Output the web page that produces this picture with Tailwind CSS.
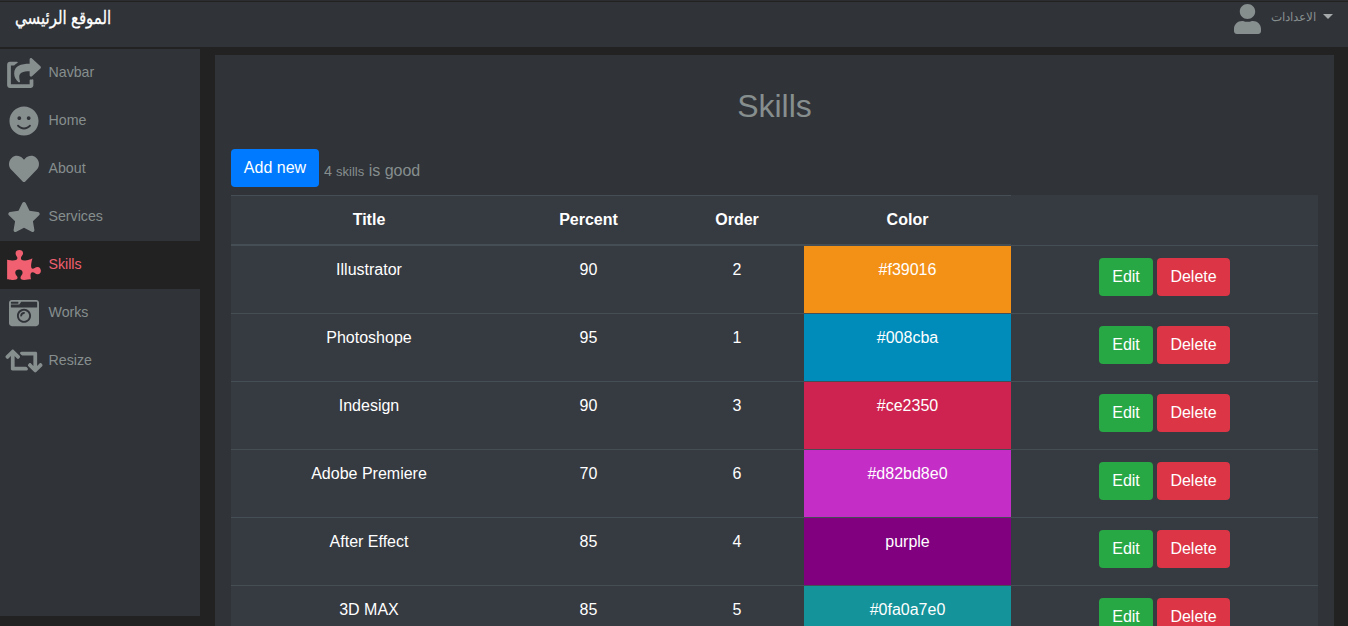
<!DOCTYPE html>
<html lang="en">
<head>
<meta charset="utf-8">
<title>Skills</title>
<script src="https://cdn.jsdelivr.net/npm/@tailwindcss/browser@4"></script>
</head>
<body class="h-[626px] overflow-hidden bg-[#222222] font-['Liberation_Sans',Arial,sans-serif] text-base text-[#868e8e]">
<header class="flex h-[47px] items-start justify-between border-t border-[#2b2d31] bg-[#303338] shadow-[inset_0_1px_0_#222]">
  <a class="ml-[15px] mt-[3px] origin-left scale-x-[0.835] text-[18px] leading-7 text-white [-webkit-text-stroke:0.3px_white] font-['Liberation_Sans','DejaVu_Sans',sans-serif]" dir="rtl">الموقع الرئيسي</a>
  <div class="mr-[15px] flex items-start">
    <svg class="mt-[3px] h-[30px] w-[27px]" viewBox="0 0 448 512" preserveAspectRatio="none" fill="currentColor"><path d="M224 256c70.7 0 128-57.3 128-128S294.7 0 224 0 96 57.3 96 128s57.3 128 128 128zm89.6 32h-16.7c-22.2 10.2-46.9 16-72.9 16s-50.6-5.8-72.9-16h-16.7C60.2 288 0 348.2 0 422.4V464c0 26.5 21.5 48 48 48h352c26.5 0 48-21.5 48-48v-41.6c0-74.2-60.2-134.4-134.4-134.4z"/></svg>
    <span class="ml-[10px] mt-[6px] text-[12px] leading-5" dir="rtl">الاعدادات</span>
    <span class="ml-[7px] mt-[13px] border-x-[5px] border-t-[5px] border-x-transparent border-t-[#a5a9aa]"></span>
  </div>
</header>
<div class="mt-[2px] flex items-start">
  <nav class="h-[567px] w-[200px] shrink-0 bg-[#303338] text-[14.2px]">
    <a class="flex h-12 items-center pl-[5px]"><svg class="h-[30px] w-[38px]" viewBox="0 0 576 512" fill="currentColor"><path d="M568.482 177.448L424.479 313.433C409.3 327.768 384 317.14 384 295.985v-71.963c-144.575.97-205.566 35.113-164.775 171.353 4.483 14.973-12.846 26.567-25.006 17.33C155.252 383.105 120 326.488 120 269.339c0-143.937 117.599-172.5 264-173.312V24.012c0-21.174 25.317-31.768 40.479-17.448l144.003 135.988c10.02 9.463 10.028 25.425 0 34.896zM384 379.128V448H64V128h50.916a11.99 11.99 0 0 0 8.648-3.693c14.953-15.568 32.237-27.89 51.014-37.676C185.708 80.83 181.584 64 169.033 64H48C21.49 64 0 85.49 0 112v352c0 26.51 21.49 48 48 48h352c26.51 0 48-21.49 48-48v-88.806c0-8.288-8.197-14.066-16.011-11.302a71.83 71.83 0 0 1-34.189 3.377c-7.27-1.046-13.8 4.514-13.8 11.859z"/></svg><span class="ml-[5.5px]">Navbar</span></a>
    <a class="flex h-12 items-center pl-[5px]"><svg class="h-[30px] w-[38px]" viewBox="0 0 496 512" fill="currentColor"><path d="M248 8C111 8 0 119 0 256s111 248 248 248 248-111 248-248S385 8 248 8zm80 168c17.7 0 32 14.3 32 32s-14.3 32-32 32-32-14.3-32-32 14.3-32 32-32zm-160 0c17.7 0 32 14.3 32 32s-14.3 32-32 32-32-14.3-32-32 14.3-32 32-32zm194.8 170.2C334.3 380.4 292.5 400 248 400s-86.3-19.6-114.8-53.8c-13.6-16.3 11-36.7 24.6-20.5 22.4 26.9 55.2 42.2 90.2 42.2s67.8-15.4 90.2-42.2c13.4-16.2 38.1 4.2 24.6 20.5z"/></svg><span class="ml-[5.5px]">Home</span></a>
    <a class="flex h-12 items-center pl-[5px]"><svg class="h-[30px] w-[38px]" viewBox="0 0 512 512" fill="currentColor"><path d="M462.3 62.6C407.5 15.9 326 24.3 275.7 76.2L256 96.5l-19.7-20.3C186.1 24.3 104.5 15.9 49.7 62.6c-62.8 53.6-66.1 149.8-9.9 207.9l193.5 199.8c12.5 12.9 32.8 12.9 45.3 0l193.5-199.8c56.3-58.1 53-154.3-9.8-207.9z"/></svg><span class="ml-[5.5px]">About</span></a>
    <a class="flex h-12 items-center pl-[5px]"><svg class="h-[30px] w-[38px]" viewBox="0 0 576 512" fill="currentColor"><path d="M259.3 17.8L194 150.2 47.9 171.5c-26.2 3.8-36.7 36.1-17.7 54.6l105.7 103-25 145.5c-4.5 26.3 23.2 46 46.4 33.7L288 439.6l130.7 68.7c23.2 12.2 50.9-7.4 46.4-33.7l-25-145.5 105.7-103c19-18.5 8.5-50.8-17.7-54.6L382 150.2 316.7 17.8c-11.7-23.6-45.6-23.9-57.4 0z"/></svg><span class="ml-[5.5px]">Services</span></a>
    <a class="flex h-12 items-center bg-[#222222] pl-[5px] text-[#f16070]"><svg class="h-[30px] w-[38px]" viewBox="0 0 576 512" fill="currentColor"><path d="M519.442 288.651c-41.519 0-59.5 31.593-82.058 31.593C377.409 320.244 432 144 432 144s-196.288 80-196.288-3.297c0-35.827 36.288-46.25 36.288-85.985C272 19.216 243.885 0 210.539 0c-34.654 0-66.366 18.891-66.366 56.346 0 41.364 31.711 59.277 31.711 81.75C175.885 207.719 0 166.758 0 166.758v333.237s178.635 41.047 178.635-28.662c0-22.473-40-40.107-40-81.471 0-37.456 29.25-56.346 63.577-56.346 33.673 0 61.788 19.216 61.788 54.717 0 39.735-36.288 50.158-36.288 85.985 0 60.803 129.675 25.73 181.23 25.73 0 0-34.725-120.101 25.827-120.101 35.962 0 46.423 36.152 86.308 36.152C556.712 416 576 387.99 576 354.443c0-34.199-18.962-65.792-56.558-65.792z"/></svg><span class="ml-[5.5px]">Skills</span></a>
    <a class="flex h-12 items-center pl-[5px]"><svg class="h-[30px] w-[38px]" viewBox="0 0 512 512" fill="currentColor"><path d="M48 32C21.5 32 0 53.5 0 80v352c0 26.5 21.5 48 48 48h416c26.5 0 48-21.5 48-48V80c0-26.5-21.5-48-48-48H48zm0 32h106c3.3 0 6 2.7 6 6v20c0 3.3-2.7 6-6 6H38c-3.3 0-6-2.7-6-6V80c0-8.8 7.2-16 16-16zm426 96H38c-3.3 0-6-2.7-6-6v-36c0-3.3 2.7-6 6-6h138l30.2-45.3c1.1-1.7 3-2.7 5-2.7H464c8.8 0 16 7.2 16 16v74c0 3.3-2.7 6-6 6zM256 424c-66.2 0-120-53.8-120-120s53.8-120 120-120 120 53.8 120 120-53.8 120-120 120zm0-208c-48.5 0-88 39.5-88 88s39.5 88 88 88 88-39.5 88-88-39.5-88-88-88zm-48 104c-8.8 0-16-7.2-16-16 0-35.3 28.7-64 64-64 8.8 0 16 7.2 16 16s-7.2 16-16 16c-17.6 0-32 14.4-32 32 0 8.8-7.2 16-16 16z"/></svg><span class="ml-[5.5px]">Works</span></a>
    <a class="flex h-12 items-center pl-[5px]"><svg class="h-[30px] w-[38px]" viewBox="0 0 640 512" fill="currentColor"><path d="M629.657 343.598L528.971 444.284c-9.373 9.372-24.568 9.372-33.941 0L394.343 343.598c-9.373-9.373-9.373-24.569 0-33.941l10.823-10.823c9.562-9.562 25.133-9.34 34.419.492L480 342.118V160H292.451a24.005 24.005 0 0 1-16.971-7.029l-16-16C244.361 121.851 255.069 96 276.451 96H520c13.255 0 24 10.745 24 24v222.118l40.416-42.792c9.285-9.831 24.856-10.054 34.419-.492l10.823 10.823c9.372 9.372 9.372 24.569-.001 33.941zm-265.138 15.431A23.999 23.999 0 0 0 347.548 352H160V169.881l40.416 42.792c9.286 9.831 24.856 10.054 34.419.491l10.822-10.822c9.373-9.373 9.373-24.569 0-33.941L144.971 67.716c-9.373-9.373-24.569-9.373-33.941 0L10.343 168.402c-9.373 9.373-9.373 24.569 0 33.941l10.822 10.822c9.562 9.562 25.133 9.34 34.419-.491L96 169.881V392c0 13.255 10.745 24 24 24h243.549c21.382 0 32.09-25.851 16.971-40.971l-16.001-16z"/></svg><span class="ml-[5.5px]">Resize</span></a>
  </nav>
  <main class="ml-[15px] mt-[6px] h-[571px] w-[1119px] shrink-0 overflow-hidden bg-[#303338] px-4 pt-8">
    <h1 class="h-[62px] text-center text-[32px] leading-[38px]">Skills</h1>
    <div class="flex h-[46px] items-start">
      <a class="h-[38px] w-[88px] rounded bg-[#007bff] pt-[7px] text-center leading-6 text-white">Add new</a>
      <p class="ml-[5px] mt-[10px] leading-6"><span class="text-[14.4px]">4 </span><span class="text-[13px]">skills</span> is good</p>
    </div>
    <table class="w-[1087px] table-fixed border-separate border-spacing-0 bg-[#363a41] text-center leading-6 text-white">
      <colgroup><col class="w-[276px]"><col class="w-[163px]"><col class="w-[134px]"><col class="w-[207px]"><col class="w-[307px]"></colgroup>
      <thead>
        <tr class="h-[50px]">
          <th class="border-y border-[#454d55]">Title</th><th class="border-y border-[#454d55]">Percent</th><th class="border-y border-[#454d55]">Order</th><th class="border-y border-[#454d55]">Color</th><td></td>
        </tr>
      </thead>
      <tbody id="rows"></tbody>
    </table>
  </main>
</div>
<script>
const skills = [
  ['Illustrator', 90, 2, '#f39016', '#f39016'],
  ['Photoshope', 95, 1, '#008cba', '#008cba'],
  ['Indesign', 90, 3, '#ce2350', '#ce2350'],
  ['Adobe Premiere', 70, 6, '#d82bd8e0', '#c42dc6'],
  ['After Effect', 85, 4, 'purple', 'purple'],
  ['3D MAX', 85, 5, '#0fa0a7e0', '#14939a'],
];
document.getElementById('rows').innerHTML = skills.map(([title, percent, order, color, fill]) => `
<tr class="h-[68px] align-top">
  <td class="border-t border-[#454d55] pt-3">${title}</td>
  <td class="border-t border-[#454d55] pt-3">${percent}</td>
  <td class="border-t border-[#454d55] pt-3">${order}</td>
  <td class="border-t border-[#454d55] pt-3" style="background:${fill}">${color}</td>
  <td class="border-t border-[#454d55] pt-3"><div class="flex justify-center gap-1"><a class="h-[38px] w-[54px] rounded bg-[#28a745] pt-[7px]">Edit</a><a class="h-[38px] w-[73px] rounded bg-[#dc3545] pt-[7px]">Delete</a></div></td>
</tr>`).join('');
</script>
</body>
</html>
